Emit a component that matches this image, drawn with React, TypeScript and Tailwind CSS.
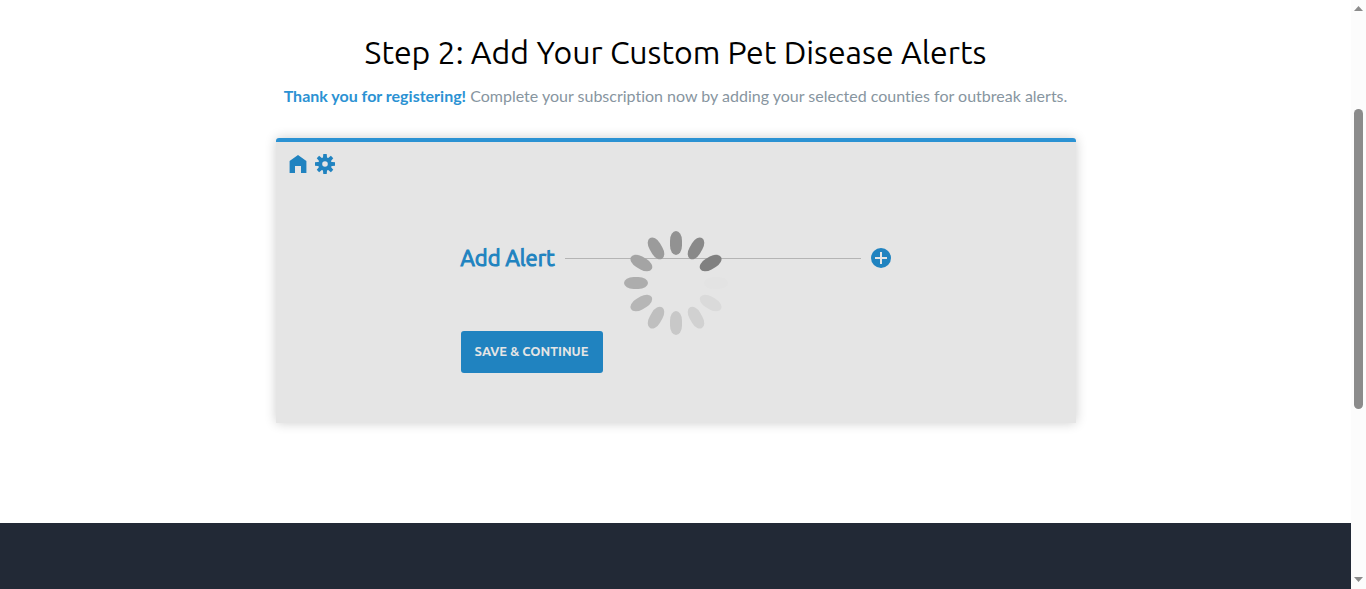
const petals = [
  { angle: 0, fill: "#929292" },
  { angle: 30, fill: "#898989" },
  { angle: 60, fill: "#808080" },
  { angle: 90, fill: "#e3e3e3" },
  { angle: 120, fill: "#dadada" },
  { angle: 150, fill: "#d1d1d1" },
  { angle: 180, fill: "#c8c8c8" },
  { angle: 210, fill: "#bfbfbf" },
  { angle: 240, fill: "#b6b6b6" },
  { angle: 270, fill: "#adadad" },
  { angle: 300, fill: "#a4a4a4" },
  { angle: 330, fill: "#9b9b9b" },
];

function Spinner() {
  return (
    <svg viewBox="0 0 120 120" className="size-[120px]" role="status" aria-label="Loading">
      {petals.map(({ angle, fill }) => (
        <rect
          key={angle}
          x="54"
          y="8"
          width="12"
          height="24"
          rx="6"
          ry="9.6"
          fill={fill}
          transform={`rotate(${angle} 60 60)`}
        />
      ))}
    </svg>
  );
}

function HomeIcon() {
  return (
    <svg viewBox="0 0 18 18" className="h-[18px] w-[18px]" fill="currentColor" aria-hidden="true">
      <path d="M9 0 17.4 6V18H12V11H6V18H.6V6Z" />
    </svg>
  );
}

const teeth = [0, 45, 90, 135, 180, 225, 270, 315];

function GearIcon() {
  return (
    <svg viewBox="0 0 20 20" className="size-5" fill="currentColor" aria-hidden="true">
      {teeth.map((angle) => (
        <path key={angle} d="M8.3 0h3.4l.5 5H7.8Z" transform={`rotate(${angle} 10 10)`} />
      ))}
      <path
        fillRule="evenodd"
        d="M10 3.2a6.8 6.8 0 1 0 0 13.6a6.8 6.8 0 1 0 0-13.6ZM10 7.2a2.8 2.8 0 1 1 0 5.6a2.8 2.8 0 1 1 0-5.6Z"
      />
    </svg>
  );
}

function PlusIcon() {
  return (
    <svg viewBox="0 0 20 20" className="size-5" aria-hidden="true">
      <circle cx="10" cy="10" r="10" fill="#2083c0" />
      <path d="M10 4v12M4 10h12" stroke="#e5e5e5" strokeWidth="2" />
    </svg>
  );
}

function AlertPanel() {
  return (
    <section className="relative mx-auto mt-[30px] max-w-[800px] rounded-t-[3px] border-t-4 border-[#2b92d3] bg-[#e5e5e5] pb-[50px] shadow-[0_0_12px_rgba(0,0,0,0.2)]">
      <nav className="flex items-center gap-2 px-[13px] pt-3 text-[#2083c0]">
        <a href="#home" aria-label="Home">
          <HomeIcon />
        </a>
        <a href="#settings" aria-label="Settings">
          <GearIcon />
        </a>
      </nav>
      <form className="mx-auto mt-[68px] w-[430px]" onSubmit={(e) => e.preventDefault()}>
        <div className="flex items-center gap-[10px]">
          <h2 className="font-['Ubuntu','Noto_Sans',sans-serif] text-[22px] leading-[32px] font-normal text-[#2083c0] [-webkit-text-stroke:1px_#2083c0]">
            Add Alert
          </h2>
          <hr className="grow border-t border-[#b4b4b4]" />
          <button type="button" aria-label="Add alert">
            <PlusIcon />
          </button>
        </div>
        <button
          type="submit"
          className="mt-[57px] h-[42px] w-[142px] rounded-[3px] bg-[#2083c0] font-['Ubuntu','Open_Sans',sans-serif] text-[13px] font-bold whitespace-nowrap text-[#e5e5e5]"
        >
          SAVE &amp; CONTINUE
        </button>
      </form>
      <div className="pointer-events-none absolute inset-0 flex items-center justify-center pt-px">
        <Spinner />
      </div>
    </section>
  );
}

function Scrollbar() {
  return (
    <div className="flex w-[15px] shrink-0 flex-col items-center justify-between bg-[#fcfcfc] pt-[6px] pb-[7px]" aria-hidden="true">
      <svg viewBox="0 0 9 5" className="h-[5px] w-[9px]" fill="#8b8b8b">
        <path d="M4.5 0 9 5H0Z" />
      </svg>
      <div className="mt-[98px] mb-auto h-[300px] w-[9px] rounded-full bg-[#8b8b8b]" />
      <svg viewBox="0 0 9 5" className="h-[5px] w-[9px]" fill="#8b8b8b">
        <path d="M4.5 5 9 0H0Z" />
      </svg>
    </div>
  );
}

export default function App() {
  return (
    <div className="flex min-h-screen bg-white font-['Lato',sans-serif]">
      <div className="flex min-w-0 grow flex-col">
        <main className="px-4 pt-8 pb-[100px]">
          <h1 className="text-center font-['Ubuntu','Noto_Sans',sans-serif] text-[32px] leading-[40px] text-black">
            Step 2: Add Your Custom Pet Disease Alerts
          </h1>
          <p className="mt-3 text-center text-[16px] leading-[24px] text-[#8795a0] [font-variant-ligatures:none]">
            <strong className="font-bold text-[#2b92d3]">Thank you for registering!</strong> Complete your
            subscription now by adding your selected counties for outbreak alerts.
          </p>
          <AlertPanel />
        </main>
        <footer className="grow bg-[#222936]" />
      </div>
      <Scrollbar />
    </div>
  );
}
